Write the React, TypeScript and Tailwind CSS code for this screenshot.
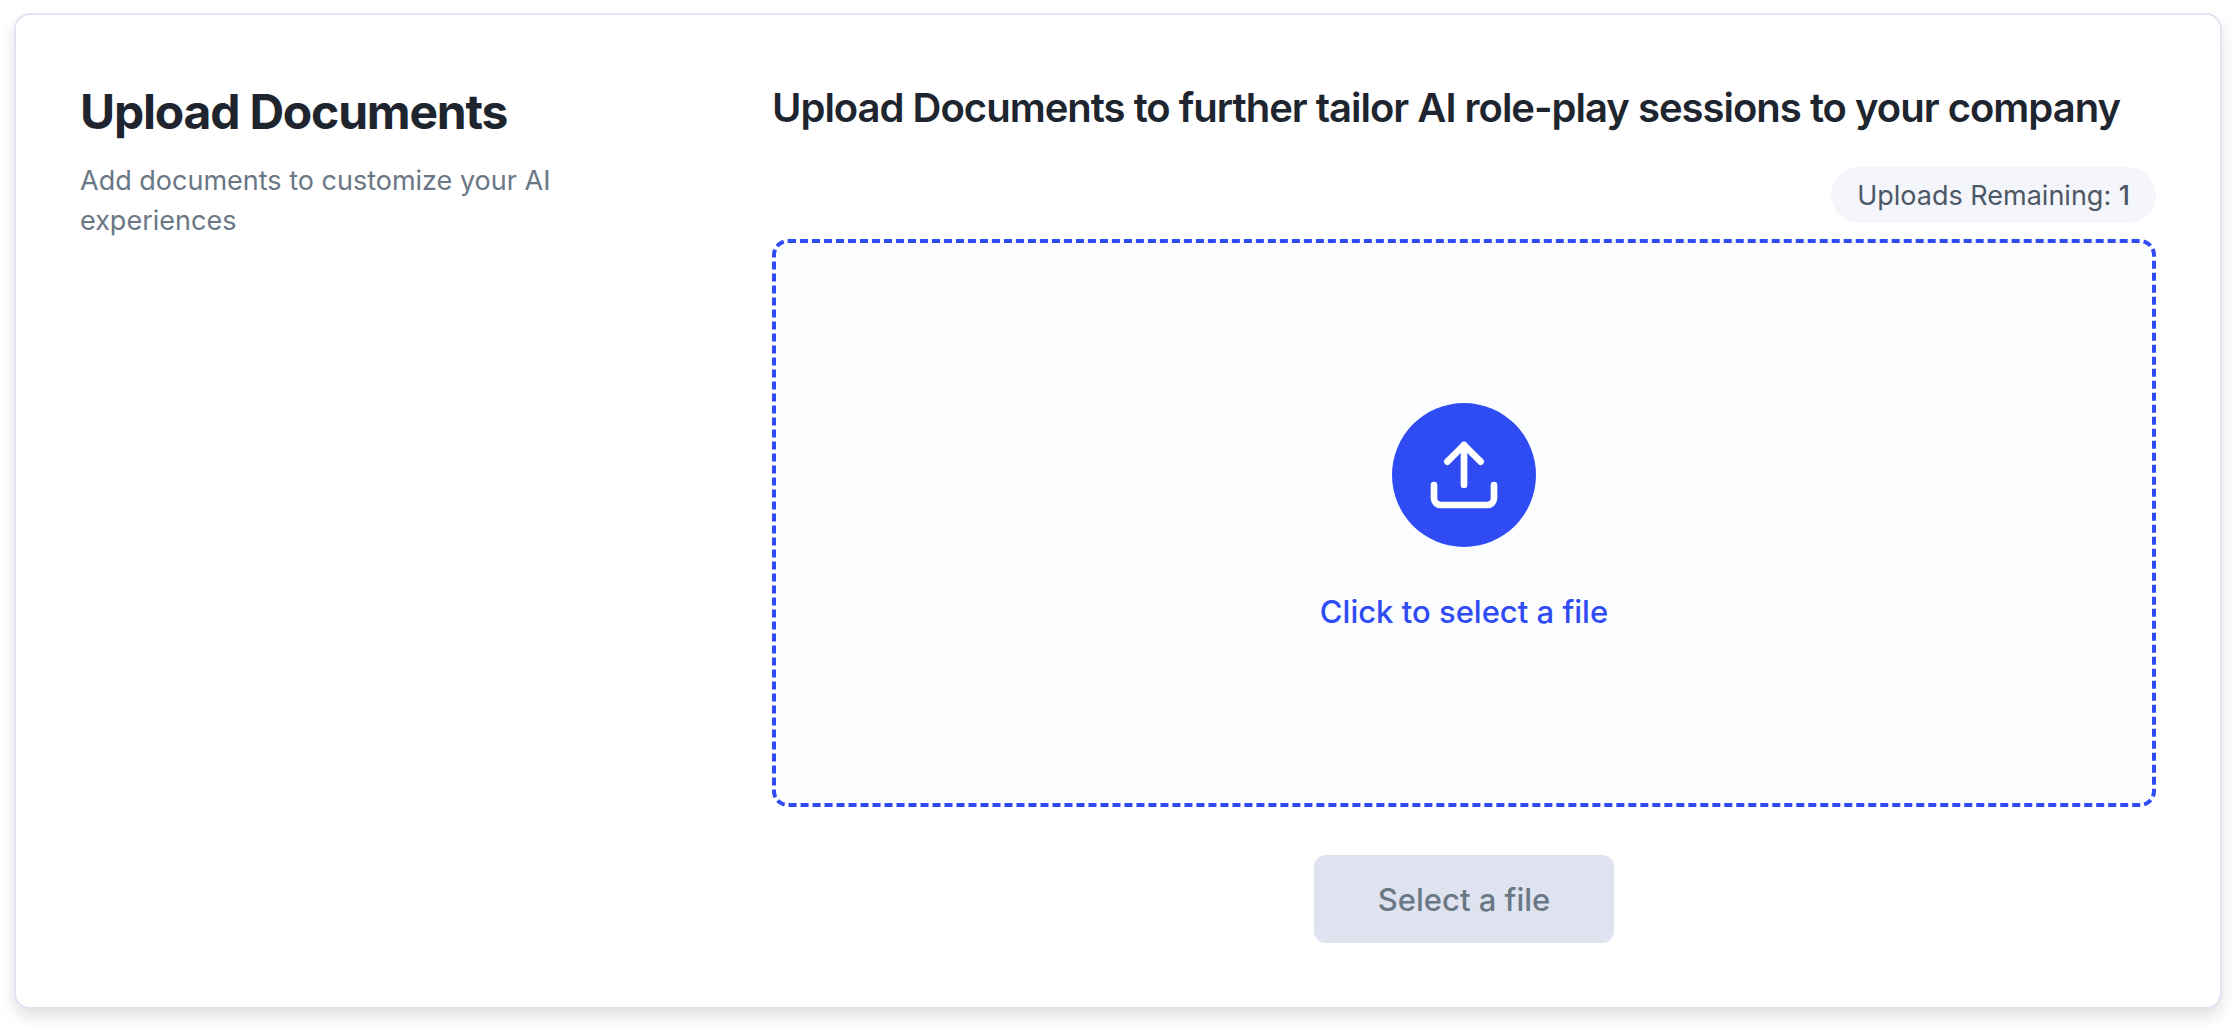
import { useRef } from "react";
import { Upload } from "lucide-react";

export default function App() {
  const fileInput = useRef<HTMLInputElement>(null);

  return (
    <main className="bg-white pt-[13px] pr-[18px] pb-[17px] pl-[14px] font-['Inter',sans-serif] antialiased">
      <section className="grid grid-cols-3 rounded-2xl border-2 border-[#e0e4f1] bg-white p-16 shadow-[0_8px_16px_rgba(0,0,0,0.12)]">
        <header className="pr-16">
          <h1 className="text-5xl leading-[66px] font-bold tracking-tight text-[#1e252f]">
            Upload Documents
          </h1>
          <p className="mt-4 text-[27px] leading-10 text-[#6a7785]">
            Add documents to customize your AI experiences
          </p>
        </header>

        <div className="col-span-2 flex flex-col">
          <h2 className="text-[40px] leading-[58px] font-semibold tracking-tight text-[#1e252f]">
            Upload Documents to further tailor AI role-play sessions to your company
          </h2>
          <p className="mt-[30px] self-end rounded-full bg-[#f5f6fb] px-[26px] pt-[9px] pb-[7px] text-[27px] leading-10 text-[#4c5866]">
            Uploads Remaining: <span className="font-medium">1</span>
          </p>
          <button
            type="button"
            onClick={() => fileInput.current?.click()}
            className="mt-4 flex cursor-pointer flex-col items-center gap-10 rounded-2xl border-4 border-dashed border-[#2e4bf4] bg-[#fcfdff] pt-40 pb-[166px]"
          >
            <span className="flex size-36 items-center justify-center rounded-full bg-[#2e4bf4] text-white">
              <Upload className="size-20" strokeWidth={2} aria-hidden="true" />
            </span>
            <span className="text-[31px] leading-[50px] font-medium text-[#2e4bf4]">
              Click to select a file
            </span>
          </button>
          <input ref={fileInput} type="file" aria-label="Document" className="hidden" />
          <button
            type="button"
            disabled
            className="mt-12 self-center rounded-xl bg-[#dfe3f0] px-16 pt-[21px] pb-[19px] text-[31px] leading-12 font-medium text-[#6a7785]"
          >
            Select a file
          </button>
        </div>
      </section>
    </main>
  );
}
